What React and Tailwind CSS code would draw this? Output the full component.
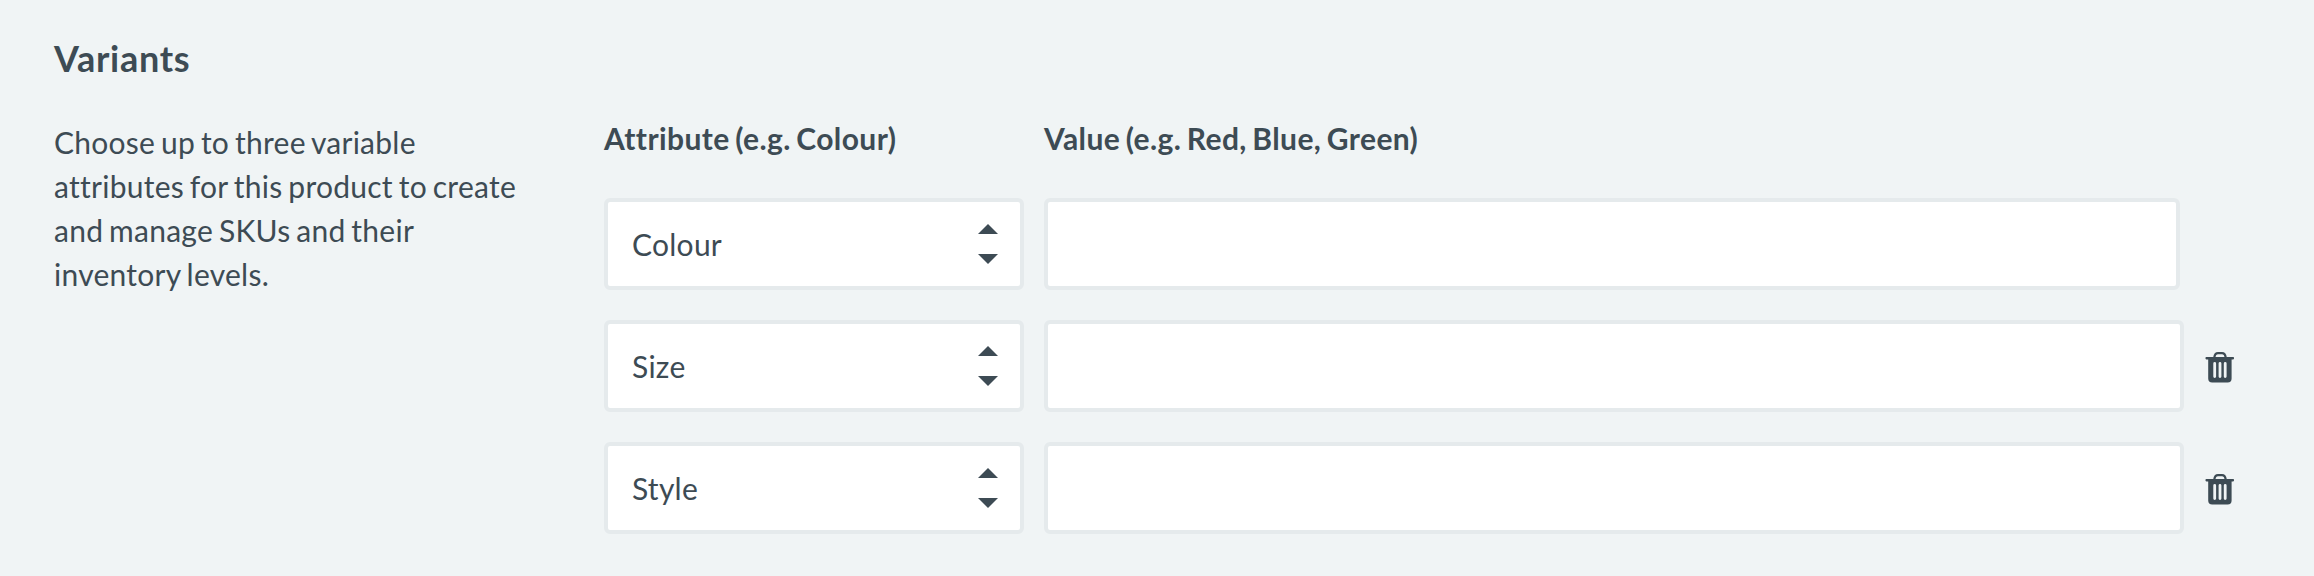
const rows = [
  { name: 'Colour', removable: false },
  { name: 'Size', removable: true },
  { name: 'Style', removable: true },
];

function SortArrows() {
  return (
    <svg className="h-10 w-5" viewBox="0 0 20 40" fill="currentColor" aria-hidden="true">
      <path d="M0 10 10 0l10 10Z" />
      <path d="M0 30h20L10 40Z" />
    </svg>
  );
}

function TrashIcon() {
  return (
    <svg className="h-8 w-[30px]" viewBox="0 0 30 32" fill="none" aria-hidden="true">
      <path d="M9.3 6.5C9.7 3.4 11 2.2 13 2.2h4c2 0 3.300 1.200 3.700 4.300" stroke="currentColor" strokeWidth="2.200" />
      <rect x="0.500" y="6" width="28.500" height="2.400" rx="0.800" fill="currentColor" />
      <path
        fill="currentColor"
        fillRule="evenodd"
        d="M3.200 7h23.400v20.500a4 4 0 0 1-4 4H7.200a4 4 0 0 1-4-4ZM9.700 11a1.400 1.400 0 0 0-1.400 1.400v13.200a1.400 1.400 0 0 0 2.800 0V12.400A1.400 1.400 0 0 0 9.700 11ZM15 11a1.400 1.400 0 0 0-1.400 1.400v13.200a1.400 1.400 0 0 0 2.800 0V12.400A1.400 1.400 0 0 0 15 11ZM20.200 11a1.400 1.400 0 0 0-1.400 1.400v13.200a1.400 1.400 0 0 0 2.800 0V12.400A1.400 1.400 0 0 0 20.200 11Z"
      />
    </svg>
  );
}

function VariantRow({ name, removable }) {
  return (
    <div className="flex items-center gap-5">
      <button
        type="button"
        className="flex h-[92px] w-[420px] items-center justify-between rounded-md border-4 border-[#e5eaec] bg-white pr-[22px] pl-6 text-left"
      >
        <span>{name}</span>
        <SortArrows />
      </button>
      <input
        type="text"
        aria-label={`${name} values`}
        className={`h-[92px] rounded-md border-4 border-[#e5eaec] bg-white px-6 outline-none ${removable ? 'w-[1140px]' : 'w-[1136px]'}`}
      />
      {removable && (
        <button type="button" aria-label={`Remove ${name}`} className="mt-0.5 ml-px flex">
          <TrashIcon />
        </button>
      )}
    </div>
  );
}

export default function App() {
  return (
    <section className="h-[576px] w-[2314px] bg-[#f0f4f5] pt-9 pl-[54px] font-['Lato',sans-serif] text-[30px] leading-[44px] tracking-[0.26px] text-[#3d4b54] [word-spacing:-2.1px]">
      <h2 className="text-[36px] leading-[44px] font-bold tracking-[0.72px]">Variants</h2>
      <div className="mt-9 flex">
        <p className="mt-1 w-[480px] shrink-0">
          Choose up to three variable attributes for this product to create and manage SKUs and their inventory levels.
        </p>
        <div className="ml-[70px]">
          <div className="flex gap-5 font-bold tracking-[0.4px]">
            <div className="w-[420px]">Attribute (e.g. Colour)</div>
            <div>Value (e.g. Red, Blue, Green)</div>
          </div>
          <div className="mt-[38px] flex flex-col gap-[30px]">
            {rows.map((row) => (
              <VariantRow key={row.name} {...row} />
            ))}
          </div>
        </div>
      </div>
    </section>
  );
}
